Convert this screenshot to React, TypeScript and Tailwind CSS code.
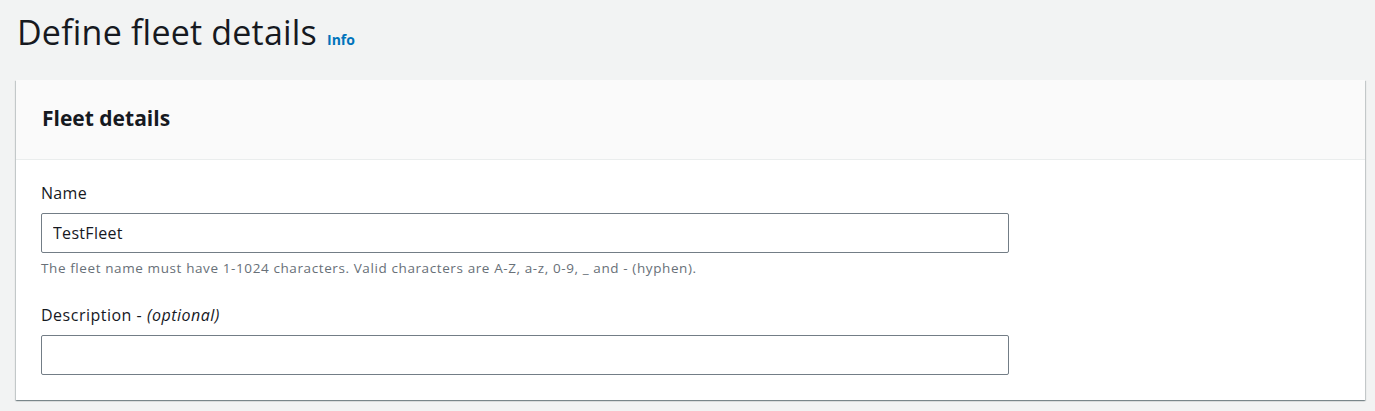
import React, { useState } from 'react';

const font = { fontFamily: '"Open Sans", "Noto Sans", Arial, sans-serif' };

const App: React.FC = () => {
  const [name, setName] = useState('TestFleet');
  const [description, setDescription] = useState('');

  return (
    <div className="min-h-screen bg-[#f2f3f3] text-[#16191f]" style={font}>
      <div className="pl-4 pr-[10px] pt-[10px]">
        <h1 className="flex items-baseline gap-[10px]">
          <span className="text-[34px] leading-[44px] font-normal tracking-[0.2px] pl-[1px]">Define fleet details</span>
          <a href="#" className="text-[14px] font-bold text-[#0073bb]">Info</a>
        </h1>

        <section className="mt-[26px] bg-white shadow-[0_1px_1px_0_rgba(0,28,36,0.3),1px_1px_1px_0_rgba(0,28,36,0.15),-1px_1px_1px_0_rgba(0,28,36,0.15)]">
          <header className="h-[80px] flex items-center px-[26px] pb-[2px] bg-[#fafafa] border-b border-[#eaeded]">
            <h2 className="text-[21px] font-bold leading-none">Fleet details</h2>
          </header>

          <div className="px-[25px] pt-[22px] pb-[25px] flex flex-col">
            <label className="text-[16px] leading-[22px] tracking-[0.3px]">Name</label>
            <input
              value={name}
              onChange={e => setName(e.target.value)}
              className="mt-[9px] w-[968px] h-[40px] px-[11px] text-[16px] tracking-[0.3px] border border-[#737d86] rounded-[2px] bg-white outline-none"
            />
            <p className="mt-[6px] text-[13.5px] leading-[18px] tracking-[0.6px] text-[#687078]">
              The fleet name must have 1-1024 characters. Valid characters are A-Z, a-z, 0-9, _ and - (hyphen).
            </p>

            <label className="mt-[27px] text-[16px] leading-[22px] tracking-[0.5px]">
              Description - <i>(optional)</i>
            </label>
            <input
              value={description}
              onChange={e => setDescription(e.target.value)}
              className="mt-[9px] w-[968px] h-[40px] px-[11px] text-[16px] border border-[#737d86] rounded-[2px] bg-white outline-none"
            />
          </div>
        </section>
      </div>
    </div>
  );
};

export default App;
